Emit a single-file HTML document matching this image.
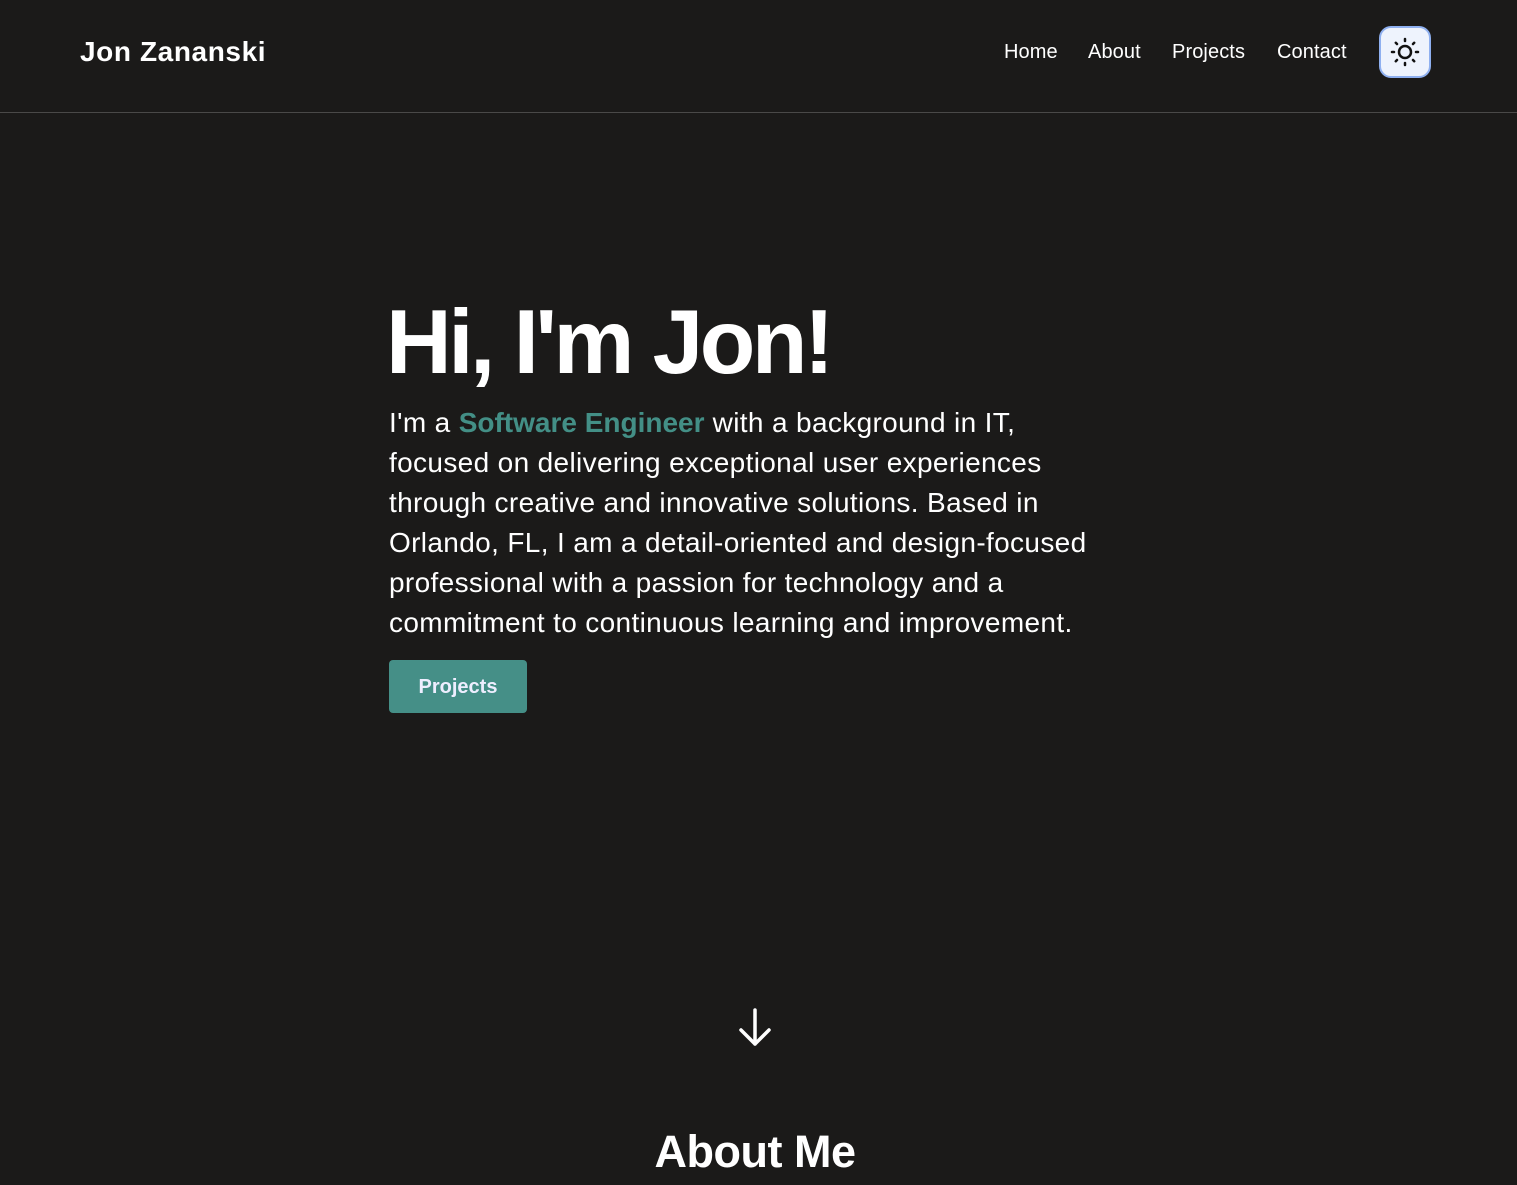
<!DOCTYPE html>
<html><head><style>
*{margin:0;padding:0;box-sizing:border-box}
body{width:1517px;height:1185px;overflow:hidden;background:#1b1a19;color:#fff;font-family:"Liberation Sans",sans-serif}
header{height:113px;border-bottom:1px solid #4a4948;position:relative}
.logo{position:absolute;left:80px;top:36px;font-size:28px;font-weight:bold;letter-spacing:0.6px}
nav{position:absolute;top:41px;font-size:20px}
nav a{position:absolute;color:#fff;text-decoration:none;white-space:nowrap;letter-spacing:0.1px}
.btn{position:absolute;left:1379px;top:26px;width:52px;height:52px;background:#eef3fd;border:2px solid #8fb0f0;border-radius:12px}
h1{position:absolute;left:386px;top:288px;font-size:91px;font-weight:bold;letter-spacing:-3.5px;line-height:110px}
p{position:absolute;left:389px;top:403px;font-size:28px;line-height:40px;letter-spacing:0.35px;white-space:nowrap}
.t{color:#438f86;font-weight:bold;letter-spacing:0}
.pb{position:absolute;left:389px;top:660px;width:138px;height:53px;background:#458f87;border-radius:4px;font-size:20px;font-weight:bold;text-align:center;line-height:55px;color:#eef}
h2{position:absolute;left:0;width:1510px;text-align:center;top:1126px;font-size:45px;font-weight:bold;letter-spacing:-0.5px}
</style></head><body>
<header>
<div class="logo">Jon Zananski</div>
<nav>
<a style="left:1004px">Home</a><a style="left:1088px">About</a><a style="left:1172px">Projects</a><a style="left:1277px">Contact</a>
</nav>
<div class="btn"><svg width="48" height="48" viewBox="0 0 48 48" style="position:absolute;left:0;top:0">
<circle cx="24" cy="24" r="6" fill="none" stroke="#111" stroke-width="2.5"/>
<g stroke="#111" stroke-width="2.5" stroke-linecap="round">
<path d="M24 11v2M24 35v2M11 24h2M35 24h2M14.8 14.8l1.2 1.2M32 32l1.2 1.2M14.8 33.2l1.2-1.2M32 16l1.2-1.2"/></g></svg></div>
</header>
<h1>Hi, I'm Jon!</h1>
<p>I'm a <span class="t">Software Engineer</span> with a background in IT,<br>focused on delivering exceptional user experiences<br>through creative and innovative solutions. Based in<br>Orlando, FL, I am a detail-oriented and design-focused<br>professional with a passion for technology and a<br>commitment to continuous learning and improvement.</p>
<div class="pb">Projects</div>
<svg width="40" height="40" viewBox="0 0 40 40" style="position:absolute;left:735px;top:1007px"><path d="M20 3v34M6 23l14 14 14-14" fill="none" stroke="#fff" stroke-width="3.5" stroke-linecap="round" stroke-linejoin="round"/></svg>
<h2>About Me</h2>
</body></html>
